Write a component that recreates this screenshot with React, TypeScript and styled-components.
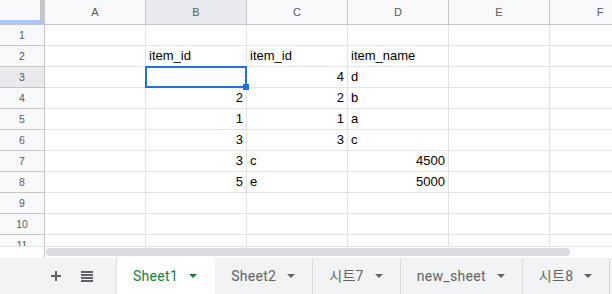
import React from 'react';
import styled, { createGlobalStyle } from 'styled-components';

const GlobalStyle = createGlobalStyle`
  html, body {
    margin: 0;
    padding: 0;
    overflow: hidden;
    background: #ffffff;
  }
  * {
    box-sizing: border-box;
  }
`;

const COLUMNS = ['A', 'B', 'C', 'D', 'E', 'F'];
const ROW_COUNT = 11;
const SELECTED = { col: 'B', row: 3 };

const data: Record<number, Record<string, string>> = {
  2: { B: 'item_id', C: 'item_id', D: 'item_name' },
  3: { C: '4', D: 'd' },
  4: { B: '2', C: '2', D: 'b' },
  5: { B: '1', C: '1', D: 'a' },
  6: { B: '3', C: '3', D: 'c' },
  7: { B: '3', C: 'c', D: '4500' },
  8: { B: '5', C: 'e', D: '5000' },
};

const sheets = ['Sheet1', 'Sheet2', '시트7', 'new_sheet', '시트8'];
const activeSheet = 'Sheet1';

const isNumber = (value: string) => /^-?\d+(\.\d+)?$/.test(value);

function App() {
  const rows = Array.from({ length: ROW_COUNT }, (_, i) => i + 1);

  return (
    <>
      <GlobalStyle />
      <Sheet>
        <GridArea>
          <Grid>
            <Corner />
            {COLUMNS.map((col) => (
              <ColHeader key={col} $active={col === SELECTED.col}>
                {col}
              </ColHeader>
            ))}
            {rows.map((row) => (
              <React.Fragment key={row}>
                <RowHeader $active={row === SELECTED.row}>{row}</RowHeader>
                {COLUMNS.map((col) => {
                  const value = data[row]?.[col] ?? '';
                  const selected = row === SELECTED.row && col === SELECTED.col;
                  return (
                    <Cell
                      key={col}
                      $align={isNumber(value) ? 'right' : 'left'}
                      $selected={selected}
                    >
                      {value}
                    </Cell>
                  );
                })}
              </React.Fragment>
            ))}
          </Grid>
        </GridArea>
        <ScrollRow>
          <ScrollCorner />
          <ScrollThumb />
        </ScrollRow>
        <TabBar>
          <Controls>
            <IconButton aria-label='add sheet'>
              <svg width='10' height='10' viewBox='0 0 10 10'>
                <path d='M5 0v10M0 5h10' stroke='#5f6368' strokeWidth='2' />
              </svg>
            </IconButton>
            <IconButton aria-label='all sheets'>
              <svg width='12' height='11' viewBox='0 0 12 11'>
                <path
                  d='M0 1h12M0 4h12M0 7h12M0 10h12'
                  stroke='#5f6368'
                  strokeWidth='2'
                />
              </svg>
            </IconButton>
          </Controls>
          <Tabs>
            {sheets.map((name) => (
              <Tab key={name} $active={name === activeSheet}>
                <TabName>{name}</TabName>
                <Caret $active={name === activeSheet} />
              </Tab>
            ))}
          </Tabs>
        </TabBar>
      </Sheet>
    </>
  );
}

export default App;

const Sheet = styled.div`
  width: 612px;
  height: 294px;
  display: flex;
  flex-direction: column;
  overflow: hidden;
  background: #ffffff;
`;

const GridArea = styled.div`
  height: 246px;
  overflow: hidden;
  flex-shrink: 0;
`;

const Grid = styled.div`
  display: grid;
  grid-template-columns: 45px repeat(6, 101px);
  grid-template-rows: 25px;
  grid-auto-rows: 21px;
  width: max-content;
`;

const Corner = styled.div`
  background: #f8f9fa;
  border-right: 1px solid #c4c7c5;
  border-bottom: 1px solid #c4c7c5;
  box-shadow: inset 0 -4px 0 #a8c7fa, inset -4px 0 0 #c4c7c5;
`;

const ColHeader = styled.div<{ $active: boolean }>`
  display: flex;
  align-items: center;
  justify-content: center;
  background: ${({ $active }) => ($active ? '#e8eaed' : '#f8f9fa')};
  border-right: 1px solid #c4c7c5;
  border-bottom: 1px solid #c4c7c5;
  font-family: 'Liberation Sans', Arial, sans-serif;
  font-size: 11px;
  color: #575a5e;
`;

const RowHeader = styled.div<{ $active: boolean }>`
  display: flex;
  align-items: center;
  justify-content: center;
  background: ${({ $active }) => ($active ? '#e8eaed' : '#f8f9fa')};
  border-right: 1px solid #c4c7c5;
  border-bottom: 1px solid #c4c7c5;
  font-family: 'Liberation Sans', Arial, sans-serif;
  font-size: 10.5px;
  color: #575a5e;
`;

const Cell = styled.div<{ $align: 'left' | 'right'; $selected: boolean }>`
  position: relative;
  padding: 0 3px;
  border-right: 1px solid #e2e3e3;
  border-bottom: 1px solid #e2e3e3;
  font-family: 'Liberation Sans', Arial, sans-serif;
  font-size: 13px;
  line-height: 20px;
  color: #000000;
  text-align: ${({ $align }) => $align};
  white-space: nowrap;

  ${({ $selected }) =>
    $selected &&
    `
    &::before {
      content: '';
      position: absolute;
      top: -1px;
      left: -1px;
      right: -1px;
      bottom: -1px;
      border: 2px solid #1a73e8;
      z-index: 1;
    }
    &::after {
      content: '';
      position: absolute;
      left: 97px;
      top: 17px;
      width: 6px;
      height: 6px;
      background: #1a73e8;
      z-index: 2;
    }
  `}
`;

const ScrollRow = styled.div`
  height: 12px;
  display: flex;
  border-top: 1px solid #e2e3e3;
  background: #ffffff;
  flex-shrink: 0;
`;

const ScrollCorner = styled.div`
  width: 45px;
  border-right: 1px solid #c4c7c5;
`;

const ScrollThumb = styled.div`
  width: 524px;
  height: 8px;
  margin: 1px 0 0 1px;
  border-radius: 4px;
  background: #dadce0;
`;

const TabBar = styled.div`
  flex: 1;
  display: flex;
  background: #f1f3f4;
`;

const Controls = styled.div`
  width: 116px;
  padding-left: 40px;
  display: flex;
  align-items: center;
  flex-shrink: 0;
`;

const IconButton = styled.button`
  width: 31px;
  height: 36px;
  padding: 0;
  border: none;
  background: transparent;
  display: flex;
  align-items: center;
  justify-content: center;
`;

const Tabs = styled.div`
  display: flex;
  border-left: 1px solid #dadce0;
`;

const Tab = styled.div<{ $active: boolean }>`
  display: flex;
  align-items: center;
  padding: 0 17px 0 16px;
  background: ${({ $active }) => ($active ? '#ffffff' : 'transparent')};
  border-right: 1px solid ${({ $active }) => ($active ? '#ffffff' : '#dadce0')};
  color: ${({ $active }) => ($active ? '#188038' : '#5f6368')};
  font-family: Roboto, 'Noto Sans CJK KR', sans-serif;
  font-size: 14px;
  font-weight: 400;
  letter-spacing: 0.3px;
  white-space: nowrap;
  flex-shrink: 0;
`;

const TabName = styled.span`
  line-height: 20px;
`;

const Caret = styled.span<{ $active: boolean }>`
  margin-left: 11px;
  width: 0;
  height: 0;
  border-left: 4px solid transparent;
  border-right: 4px solid transparent;
  border-top: 4px solid ${({ $active }) => ($active ? '#188038' : '#5f6368')};
`;
